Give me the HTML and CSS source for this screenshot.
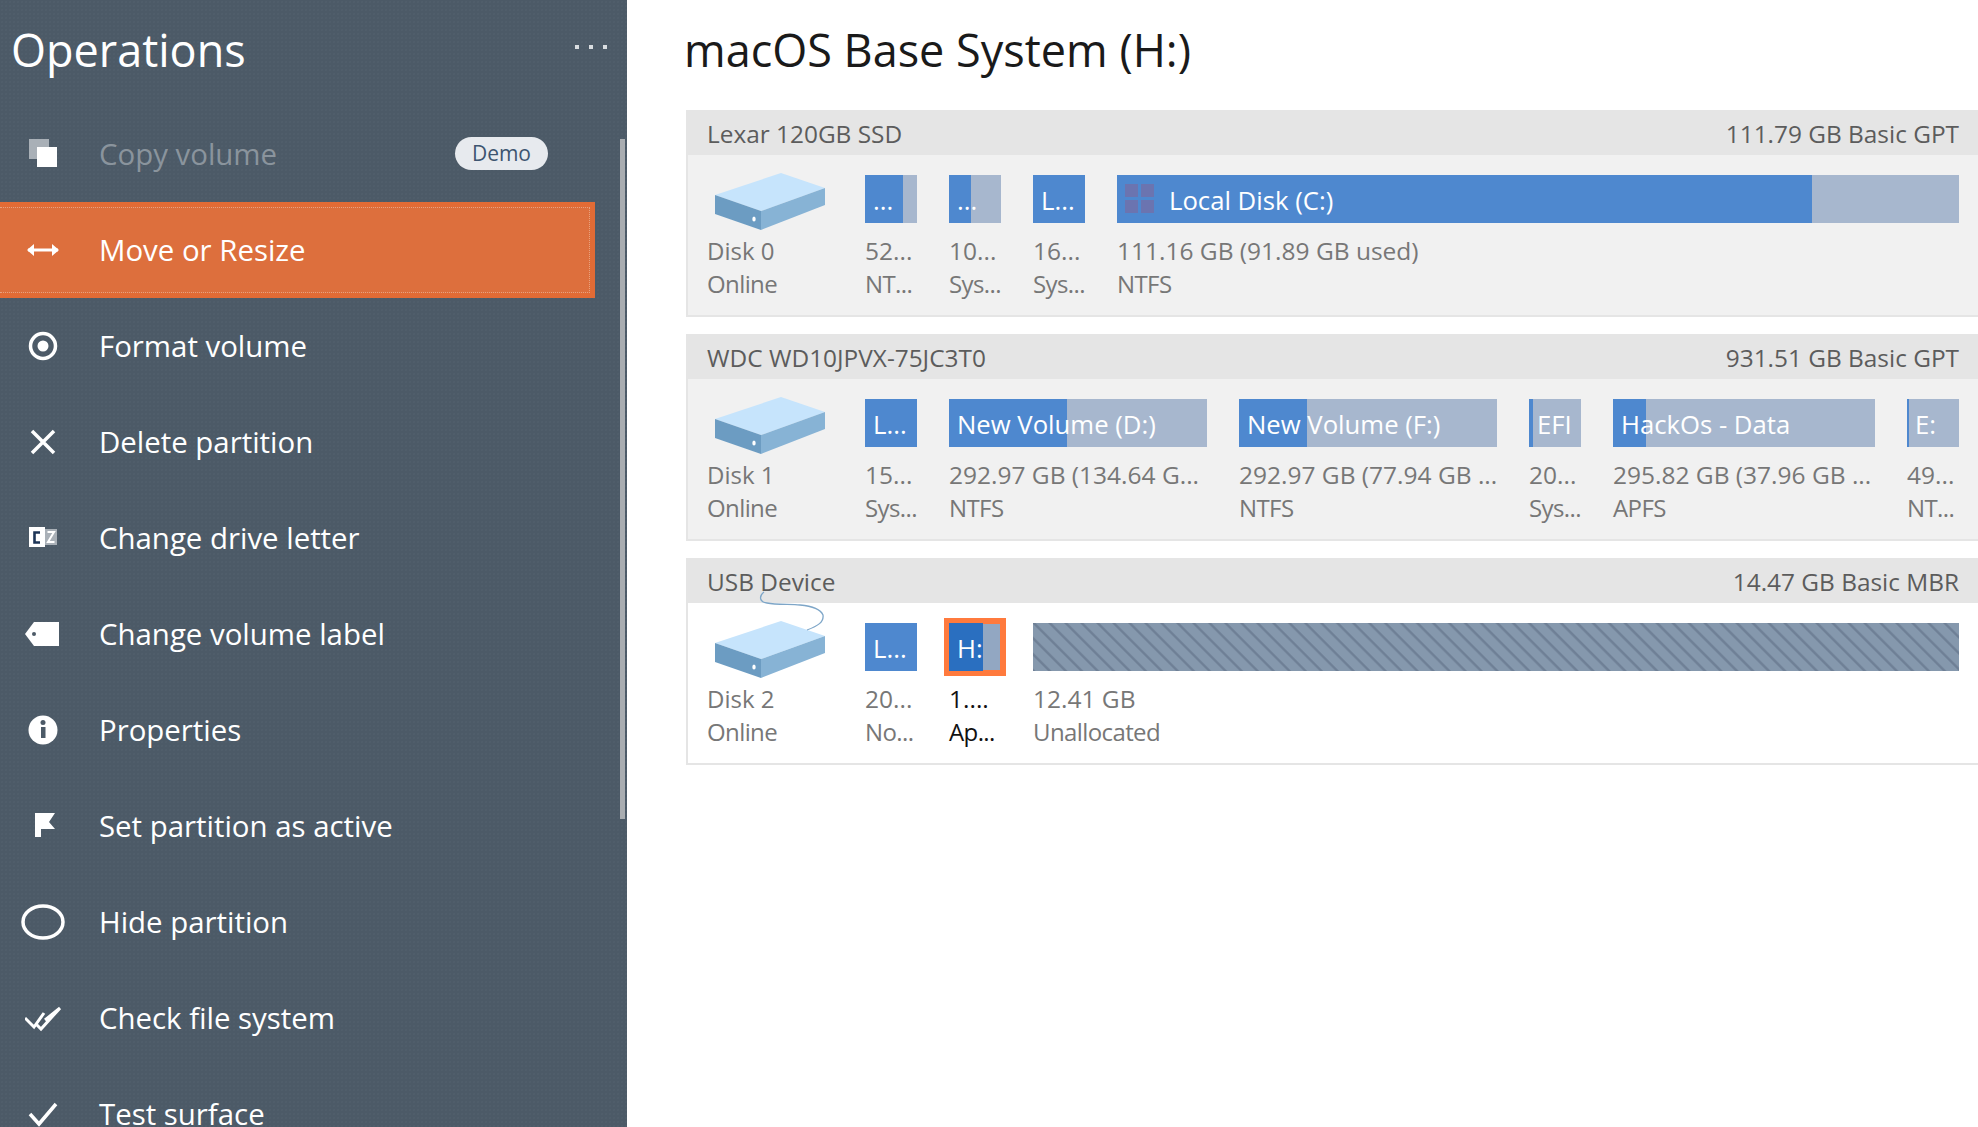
FILE: index.html
```html
<!DOCTYPE html>
<html lang="en">
<head>
    <meta charset="UTF-8">
    <meta name="viewport" content="width=device-width, initial-scale=1.0">
    <title>Operations</title>
    <link rel="stylesheet" href="styles.css">
</head>
<body>
    <svg class="sprites" width="0" height="0">
        <symbol id="disk" viewBox="0 0 110 57">
            <polygon points="0,22 66,0 110,15 46,38" fill="#c6e4fc"/>
            <polygon points="0,22 46,38 46,57 0,41" fill="#6c9cc2"/>
            <polygon points="46,38 110,15 110,32 46,57" fill="#87b3d5"/>
            <ellipse cx="39" cy="46" rx="1.7" ry="2.6" fill="#fff"/>
        </symbol>
    </svg>

    <aside class="sidebar">
        <div class="sidebar-head">
            <h2>Operations</h2>
            <div class="more"><span></span><span></span><span></span></div>
        </div>
        <div class="scrollbar"></div>
        <ul class="ops">
            <li class="op disabled">
                <svg class="icon" viewBox="0 0 36 36"><rect x="4" y="3" width="20" height="20" fill="#a9b0b7"/><rect x="12" y="11" width="20" height="20" fill="#fff"/></svg>
                <span>Copy volume</span>
                <b class="demo">Demo</b>
            </li>
            <li class="op active">
                <svg class="icon" viewBox="0 0 36 36"><path d="M3 18H33" stroke="#fff" stroke-width="3"/><path d="M9 12V24L2 18ZM27 12V24L34 18Z" fill="#fff"/></svg>
                <span>Move or Resize</span>
            </li>
            <li class="op">
                <svg class="icon" viewBox="0 0 36 36"><circle cx="18" cy="18" r="12.5" fill="none" stroke="#fff" stroke-width="3.5"/><circle cx="18" cy="18" r="5.5" fill="#fff"/></svg>
                <span>Format volume</span>
            </li>
            <li class="op">
                <svg class="icon" viewBox="0 0 36 36"><path d="M7 7L29 29M29 7L7 29" stroke="#fff" stroke-width="3.5"/></svg>
                <span>Delete partition</span>
            </li>
            <li class="op">
                <svg class="icon" viewBox="0 0 36 36"><rect x="4" y="7" width="16" height="20" fill="#fff"/><rect x="20" y="9" width="12" height="16" fill="#a9b0b7"/><path d="M15 12.5H9.5V22.5H15" fill="none" stroke="#1d3557" stroke-width="2.6"/><path d="M22.5 12H29L23 22H29.5" fill="none" stroke="#fff" stroke-width="2"/></svg>
                <span>Change drive letter</span>
            </li>
            <li class="op">
                <svg class="icon" viewBox="0 0 36 36"><path d="M9 6H34V30H9L0 18Z" fill="#fff"/><circle cx="9" cy="18" r="2" fill="#4c5a67"/></svg>
                <span>Change volume label</span>
            </li>
            <li class="op">
                <svg class="icon" viewBox="0 0 36 36"><circle cx="18" cy="18" r="14.5" fill="#fff"/><rect x="16" y="15" width="4.5" height="11" fill="#4c5a67"/><circle cx="18" cy="10.5" r="2.5" fill="#4c5a67"/></svg>
                <span>Properties</span>
            </li>
            <li class="op">
                <svg class="icon" viewBox="0 0 36 36"><path d="M10 5H30L24 14L30 21H16V29H10Z" fill="#fff"/></svg>
                <span>Set partition as active</span>
            </li>
            <li class="op">
                <svg class="icon icon-wide" viewBox="0 0 46 36"><ellipse cx="23" cy="18" rx="20" ry="16" fill="none" stroke="#fff" stroke-width="3.5"/></svg>
                <span>Hide partition</span>
            </li>
            <li class="op">
                <svg class="icon" viewBox="0 0 36 36"><path d="M0 18L9 27L19 13M12 25L16 29L35 8M20 20L35 8" fill="none" stroke="#fff" stroke-width="3"/></svg>
                <span>Check file system</span>
            </li>
            <li class="op">
                <svg class="icon" viewBox="0 0 36 36"><path d="M5 18L14 28L31 8" fill="none" stroke="#fff" stroke-width="3.5"/></svg>
                <span>Test surface</span>
            </li>
        </ul>
    </aside>

    <main class="content">
        <h1>macOS Base System (H:)</h1>

        <section class="disk">
            <header><span>Lexar 120GB SSD</span><span>111.79 GB Basic GPT</span></header>
            <div class="disk-body">
                <div class="disk-info">
                    <svg class="disk-icon"><use href="#disk"/></svg>
                    <div>Disk 0</div>
                    <div>Online</div>
                </div>
                <div class="part w-s">
                    <div class="bar"><i class="fill f73"></i><span>...</span></div>
                    <div>52...</div><div>NT...</div>
                </div>
                <div class="part w-s">
                    <div class="bar"><i class="fill f42"></i><span>...</span></div>
                    <div>10...</div><div>Sys...</div>
                </div>
                <div class="part w-s">
                    <div class="bar"><i class="fill f100"></i><span>L...</span></div>
                    <div>16...</div><div>Sys...</div>
                </div>
                <div class="part grow">
                    <div class="bar"><i class="fill f83"></i>
                        <svg class="win" viewBox="0 0 30 30"><path d="M0 0H13V13H0ZM16 0H29V13H16ZM0 16H13V29H0ZM16 16H29V29H16Z" fill="#6b74b0"/></svg>
                        <span>Local Disk (C:)</span>
                    </div>
                    <div>111.16 GB (91.89 GB used)</div><div>NTFS</div>
                </div>
            </div>
        </section>

        <section class="disk">
            <header><span>WDC WD10JPVX-75JC3T0</span><span>931.51 GB Basic GPT</span></header>
            <div class="disk-body">
                <div class="disk-info">
                    <svg class="disk-icon"><use href="#disk"/></svg>
                    <div>Disk 1</div>
                    <div>Online</div>
                </div>
                <div class="part w-s">
                    <div class="bar"><i class="fill f100"></i><span>L...</span></div>
                    <div>15...</div><div>Sys...</div>
                </div>
                <div class="part w-l">
                    <div class="bar"><i class="fill f46"></i><span>New Volume (D:)</span></div>
                    <div>292.97 GB (134.64 G...</div><div>NTFS</div>
                </div>
                <div class="part w-l">
                    <div class="bar"><i class="fill f26"></i><span>New Volume (F:)</span></div>
                    <div>292.97 GB (77.94 GB ...</div><div>NTFS</div>
                </div>
                <div class="part w-s">
                    <div class="bar"><i class="fill f8"></i><span>EFI</span></div>
                    <div>20...</div><div>Sys...</div>
                </div>
                <div class="part w-xl">
                    <div class="bar"><i class="fill f12"></i><span>HackOs - Data</span></div>
                    <div>295.82 GB (37.96 GB ...</div><div>APFS</div>
                </div>
                <div class="part w-s">
                    <div class="bar"><i class="fill f3"></i><span>E:</span></div>
                    <div>49...</div><div>NT...</div>
                </div>
            </div>
        </section>

        <section class="disk usb">
            <header><span>USB Device</span><span>14.47 GB Basic MBR</span></header>
            <div class="disk-body">
                <div class="disk-info">
                    <svg class="cable" viewBox="0 0 72 42"><path d="M8 2C3 6 3 12 11 13C20 15 35 14 44 15C55 16 64 18 67 25C68 32 62 36 51 40" fill="none" stroke="#7ea6c8" stroke-width="1.3"/></svg>
                    <svg class="disk-icon"><use href="#disk"/></svg>
                    <div>Disk 2</div>
                    <div>Online</div>
                </div>
                <div class="part w-s">
                    <div class="bar"><i class="fill f100"></i><span>L...</span></div>
                    <div>20...</div><div>No...</div>
                </div>
                <div class="part w-s selected">
                    <div class="bar"><i class="fill f66"></i><span>H:</span></div>
                    <div>1....</div><div>Ap...</div>
                </div>
                <div class="part grow">
                    <div class="bar hatch"></div>
                    <div>12.41 GB</div><div>Unallocated</div>
                </div>
            </div>
        </section>
    </main>
</body>
</html>
```

FILE: styles.css
```css
* {
    box-sizing: border-box;
}
html, body {
    height: 100%;
}
body {
    margin: 0;
    display: flex;
    overflow: hidden;
    background-color: #fff;
    font-family: "Open Sans", "Noto Sans", sans-serif;
}
.sprites {
    display: none;
}

/* left panel */
.sidebar {
    position: relative;
    flex: 0 0 627px;
    height: 100%;
    overflow: hidden;
    color: #fff;
    background-color: #4c5a67;
    background-image: radial-gradient(rgba(255, 255, 255, 0.025) 0.7px, transparent 0.8px);
    background-size: 4px 4px;
}
.sidebar-head {
    display: flex;
    justify-content: space-between;
    align-items: center;
    height: 100px;
    padding: 0 20px 0 11px;
}
.sidebar-head h2 {
    margin: 0;
    padding-bottom: 2px;
    font-size: 45px;
    font-weight: 400;
}
.more {
    display: flex;
    gap: 10px;
    margin-bottom: 6px;
}
.more span {
    width: 4px;
    height: 4px;
    background-color: #d9dde0;
}
.scrollbar {
    position: absolute;
    top: 139px;
    left: 620px;
    width: 5px;
    height: 680px;
    background-color: #a9adb1;
}
.ops {
    list-style: none;
    margin: 0;
    padding: 6px 0 0;
}
.op {
    position: relative;
    display: flex;
    align-items: center;
    height: 96px;
    width: 595px;
    padding-left: 25px;
    font-size: 29.4px;
}
.op span {
    padding-bottom: 1px;
}
.icon {
    flex: 0 0 36px;
    width: 36px;
    height: 36px;
    margin-right: 38px;
}
.icon-wide {
    flex-basis: 46px;
    width: 46px;
    margin-left: -5px;
    margin-right: 33px;
}
.op.disabled span {
    color: #8a949d;
}
.op.active {
    background-color: #dd6f3d;
    border: 5px solid #e26b35;
    border-left: 0;
}
.op.active::after {
    content: "";
    position: absolute;
    top: 0;
    right: 0;
    bottom: 0;
    left: 0;
    border: 1px dotted #e8a27f;
    border-left: 0;
}
.demo {
    margin-left: auto;
    margin-right: 47px;
    margin-top: -2px;
    padding: 2px 17px 3px;
    border-radius: 17px;
    background-color: #e7eaee;
    color: #3d5570;
    font-size: 21px;
    font-weight: 400;
}

/* disks */
.content {
    flex: 1;
    min-width: 0;
    padding: 0 0 0 59px;
}
.content h1 {
    margin: 0 0 0 -2px;
    height: 110px;
    line-height: 99px;
    font-size: 45px;
    font-weight: 400;
    color: #1a1a1a;
}
.disk {
    height: 207px;
    margin-bottom: 17px;
    background-color: #f1f1f1;
    border-left: 2px solid #e5e5e5;
    border-bottom: 2px solid #e5e5e5;
    color: #777;
    font-size: 24px;
}
.disk.usb {
    background-color: #fff;
}
.disk header {
    display: flex;
    justify-content: space-between;
    align-items: center;
    height: 45px;
    margin-left: -2px;
    padding: 2px 19px 0 21px;
    background-color: #e5e5e5;
    color: #5c5c5c;
    font-size: 24.4px;
}
.disk-body {
    display: flex;
    gap: 32px;
    padding: 20px 19px 0 19px;
}
.disk-info {
    position: relative;
    flex: 0 0 126px;
    line-height: 32.5px;
}
.disk-info div:last-child,
.part div:last-child {
    letter-spacing: -0.6px;
}
.disk-icon {
    display: block;
    width: 110px;
    height: 57px;
    margin: -2px 0 5px 8px;
}
.cable {
    position: absolute;
    top: -33px;
    left: 49px;
    width: 72px;
    height: 42px;
}
.part {
    flex: 0 0 auto;
    line-height: 32.5px;
    white-space: nowrap;
}
.part.grow {
    flex: 1;
}
.part div:nth-child(2) {
    font-size: 24.5px;
}
.w-s { width: 52px; }
.w-l { width: 258px; }
.w-xl { width: 262px; }
.bar {
    position: relative;
    display: flex;
    align-items: center;
    height: 48px;
    margin-bottom: 12px;
    padding-left: 8px;
    background-color: #a7b7ce;
    color: #fff;
    font-size: 25.7px;
}
.bar span {
    position: relative;
    padding-top: 4px;
}
.fill {
    position: absolute;
    top: 0;
    bottom: 0;
    left: 0;
    background-color: #4e88cf;
}
.f100 { width: 100%; }
.f83 { width: 82.6%; }
.f73 { width: 73%; }
.f66 { width: 66%; }
.f46 { width: 45.7%; }
.f42 { width: 42%; }
.f26 { width: 26.5%; }
.f12 { width: 12.5%; }
.f8 { width: 8%; }
.f3 { width: 3.5%; }
.win {
    position: relative;
    width: 30px;
    height: 30px;
    margin-right: 14px;
}
.selected {
    color: #111;
}
.selected .bar {
    outline: 6px solid #ff7a3d;
    outline-offset: -1px;
    background-color: #92a7c2;
}
.selected .fill {
    background-color: #2a6fc0;
}
.bar.hatch {
    padding: 0;
    background-color: #8598ad;
    background-image: repeating-linear-gradient(45deg, #6f8096 0, #6f8096 1.2px, #8598ad 2.4px, #8598ad 10px, #6f8096 11.3px);
}
```
